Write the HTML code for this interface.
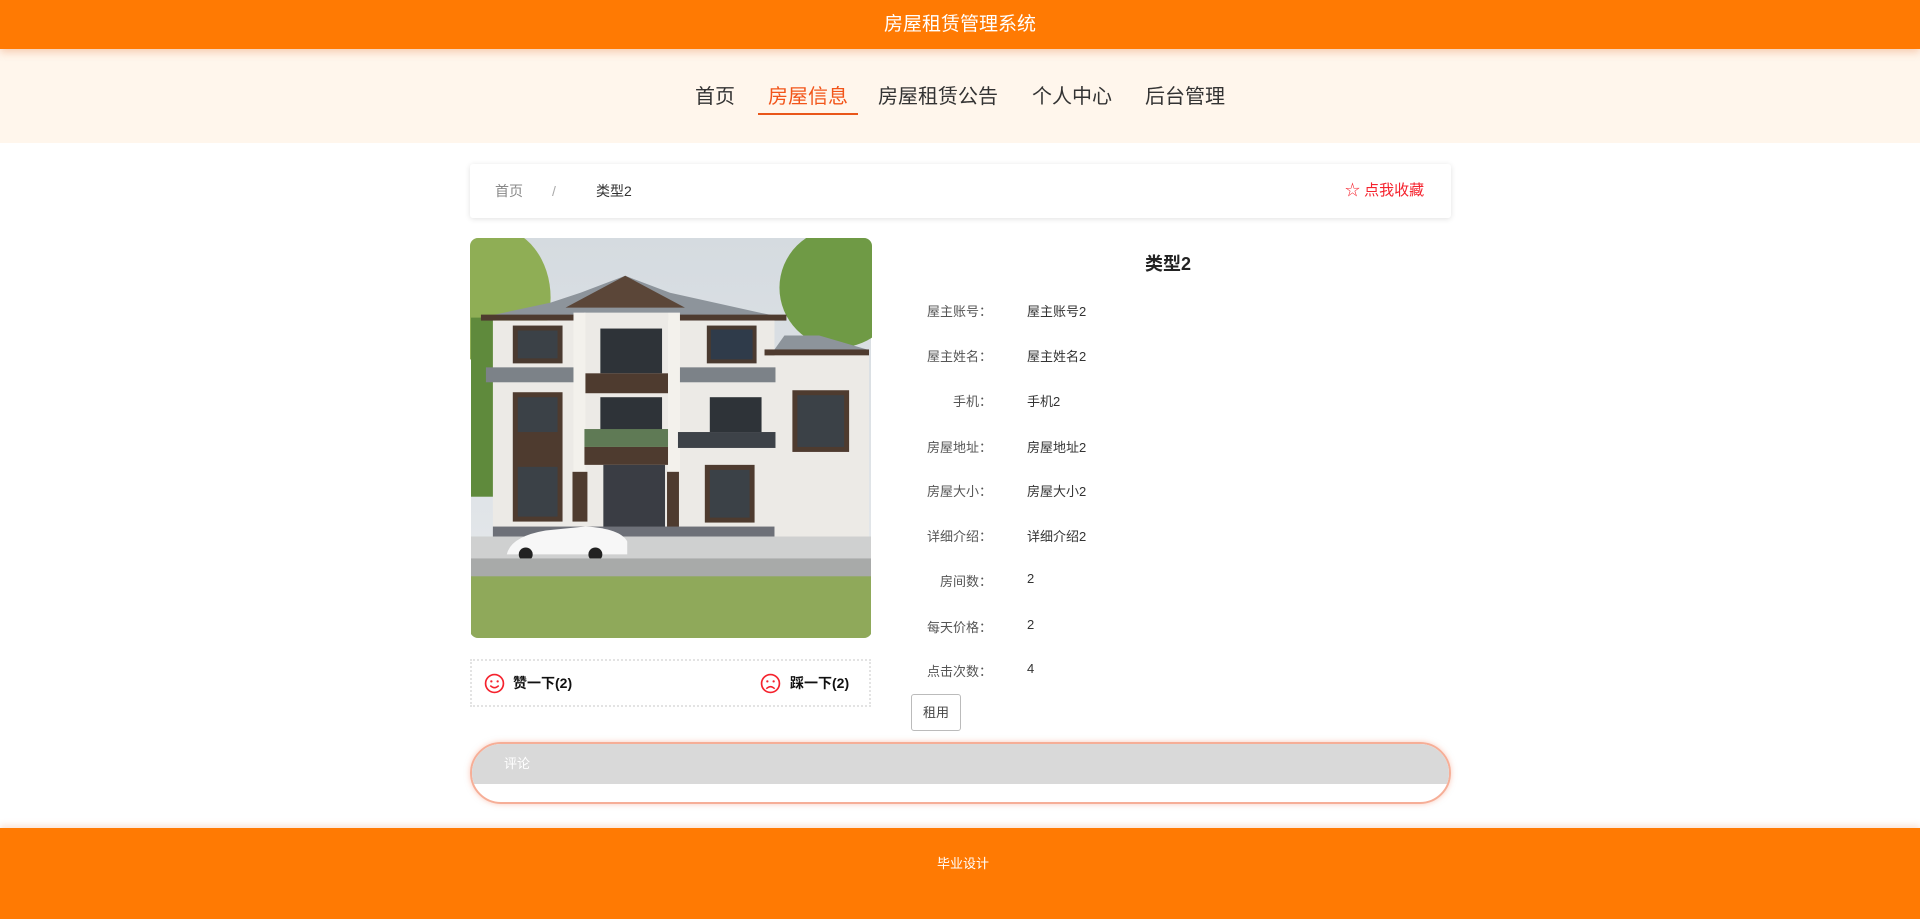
<!DOCTYPE html>
<html><head><meta charset="utf-8">
<style>
*{margin:0;padding:0;box-sizing:border-box}
body{width:1920px;height:919px;position:relative;background:#fff;font-family:"Liberation Sans","Noto Sans CJK SC",sans-serif;overflow:hidden;color:#333}
.abs{position:absolute}
.hdr{left:0;top:0;width:1920px;height:49px;background:#FF7A03;color:#fff;font-size:19px;text-align:center;line-height:50px;box-shadow:0 3px 8px rgba(230,120,60,.35);z-index:2}
.nav{left:0;top:49px;width:1920px;height:94px;background:#FFF6EC}
.nav span{position:absolute;top:34px;font-size:20px;color:#333;line-height:28px}
.bc{left:470px;top:164px;width:981px;height:54px;background:#fff;box-shadow:0 1px 6px rgba(0,0,0,.12);border-radius:3px;font-size:14px;line-height:54px}
.lbl{width:120px;text-align:right;left:872px;font-size:13px;color:#555}
.val{left:1027px;font-size:13px;color:#333}
</style></head><body>
<div class="abs hdr">房屋租赁管理系统</div>
<div class="abs nav">
<span style="left:695px">首页</span>
<span style="left:768px;color:#F2551A">房屋信息</span>
<div class="abs" style="left:758px;top:64px;width:100px;height:2px;background:#E9561A"></div>
<span style="left:878px">房屋租赁公告</span>
<span style="left:1032px">个人中心</span>
<span style="left:1145px">后台管理</span>
</div>
<div class="abs bc">
<span class="abs" style="left:25px;color:#888">首页</span>
<span class="abs" style="left:82px;color:#aaa">/</span>
<span class="abs" style="left:126px;color:#333">类型2</span>
<span class="abs" style="left:875px;color:#F5222D;font-size:15px">☆ 点我收藏</span>
</div>
<svg class="abs" style="left:470px;top:238px;border-radius:8px" width="402" height="400" viewBox="0 0 402 402">
<defs><linearGradient id="sk" x1="0" y1="0" x2="0" y2="1"><stop offset="0" stop-color="#d5dbe0"/><stop offset="1" stop-color="#e6e9ec"/></linearGradient></defs>
<rect width="402" height="402" fill="url(#sk)"/>
<ellipse cx="25" cy="60" rx="55" ry="70" fill="#8fae55"/>
<rect x="0" y="80" width="25" height="180" fill="#5f8a3c"/>
<ellipse cx="370" cy="50" rx="60" ry="60" fill="#6f9a45"/>
<polygon points="10,80 80,65 110,55 155,38 200,55 290,75 315,80" fill="#8d949b"/>
<polygon points="95,70 155,38 215,70" fill="#5b4638"/>
<rect x="10" y="77" width="307" height="6" fill="#4e3b2f"/>
<rect x="22" y="83" width="283" height="210" fill="#eceae6"/>
<polygon points="305,112 315,98 350,98 398,112" fill="#8d949b"/>
<rect x="295" y="112" width="105" height="6" fill="#4e3b2f"/>
<rect x="305" y="118" width="95" height="190" fill="#eceae6"/>
<rect x="15" y="130" width="88" height="15" fill="#7c8288"/>
<rect x="208" y="130" width="98" height="15" fill="#7c8288"/>
<rect x="42" y="88" width="50" height="38" fill="#4a3a30"/><rect x="47" y="93" width="40" height="28" fill="#3b4147"/>
<rect x="237" y="88" width="50" height="38" fill="#4a3a30"/><rect x="241" y="92" width="42" height="30" fill="#2f3b4a"/>
<rect x="114" y="75" width="84" height="80" fill="#eceae6"/>
<rect x="130" y="91" width="62" height="45" fill="#2e3338"/>
<rect x="114" y="136" width="84" height="20" fill="#4e3b2f"/>
<rect x="103" y="75" width="12" height="160" fill="#f3f1ec"/><rect x="198" y="75" width="12" height="160" fill="#f3f1ec"/>
<rect x="42" y="155" width="50" height="130" fill="#4e3b2f"/><rect x="47" y="160" width="40" height="35" fill="#3b4147"/><rect x="47" y="230" width="40" height="50" fill="#3b4147"/>
<rect x="130" y="160" width="62" height="35" fill="#2e3338"/><rect x="114" y="192" width="84" height="18" fill="#5f7a55"/>
<rect x="114" y="210" width="84" height="18" fill="#4e3b2f"/>
<rect x="240" y="160" width="52" height="35" fill="#2e3338"/><rect x="208" y="195" width="98" height="16" fill="#3d4248"/>
<rect x="323" y="153" width="57" height="62" fill="#4e3b2f"/><rect x="328" y="158" width="47" height="52" fill="#3b4147"/>
<rect x="133" y="228" width="62" height="78" fill="#3a3d44"/>
<rect x="102" y="235" width="15" height="50" fill="#4e3b2f"/><rect x="197" y="235" width="12" height="72" fill="#4e3b2f"/>
<rect x="235" y="228" width="50" height="58" fill="#4e3b2f"/><rect x="240" y="233" width="40" height="48" fill="#3b4147"/>
<rect x="22" y="290" width="283" height="12" fill="#6d7078"/>
<rect x="0" y="300" width="402" height="22" fill="#cfd0d0"/>
<path d="M36,318 Q40,300 75,294 L115,290 Q150,292 157,305 L157,318 Z" fill="#f7f7f7"/>
<circle cx="55" cy="318" r="7" fill="#222"/><circle cx="125" cy="318" r="7" fill="#222"/>
<rect x="0" y="322" width="402" height="20" fill="#a8aaa9"/>
<rect x="0" y="340" width="402" height="62" fill="#8fa95a"/>
</svg>
<div class="abs" style="left:470px;top:659px;width:401px;height:48px;border:2px dotted #e3e3e3;font-size:14px;font-weight:bold;color:#111;line-height:44px">
<svg class="abs" style="left:12px;top:12px" width="21" height="21" viewBox="0 0 20 20"><circle cx="10" cy="10" r="8.5" fill="none" stroke="#F5222D" stroke-width="1.6"/><circle cx="7" cy="8" r="1.1" fill="#F5222D"/><circle cx="13" cy="8" r="1.1" fill="#F5222D"/><path d="M6,12 Q10,16 14,12" fill="none" stroke="#F5222D" stroke-width="1.5"/></svg>
<span class="abs" style="left:41px">赞一下(2)</span>
<svg class="abs" style="left:288px;top:12px" width="21" height="21" viewBox="0 0 20 20"><circle cx="10" cy="10" r="8.5" fill="none" stroke="#F5222D" stroke-width="1.6"/><circle cx="7" cy="8" r="1.1" fill="#F5222D"/><circle cx="13" cy="8" r="1.1" fill="#F5222D"/><path d="M6,15 Q10,11 14,15" fill="none" stroke="#F5222D" stroke-width="1.5"/></svg>
<span class="abs" style="left:318px">踩一下(2)</span>
</div>
<div class="abs" style="left:1145px;top:250px;font-size:18px;font-weight:bold;color:#222">类型2</div>
<div class="abs lbl" style="top:301px">屋主账号：</div><div class="abs val" style="top:301px">屋主账号2</div>
<div class="abs lbl" style="top:346px">屋主姓名：</div><div class="abs val" style="top:346px">屋主姓名2</div>
<div class="abs lbl" style="top:391px">手机：</div><div class="abs val" style="top:391px">手机2</div>
<div class="abs lbl" style="top:437px">房屋地址：</div><div class="abs val" style="top:437px">房屋地址2</div>
<div class="abs lbl" style="top:481px">房屋大小：</div><div class="abs val" style="top:481px">房屋大小2</div>
<div class="abs lbl" style="top:526px">详细介绍：</div><div class="abs val" style="top:526px">详细介绍2</div>
<div class="abs lbl" style="top:571px">房间数：</div><div class="abs val" style="top:571px">2</div>
<div class="abs lbl" style="top:617px">每天价格：</div><div class="abs val" style="top:617px">2</div>
<div class="abs lbl" style="top:661px">点击次数：</div><div class="abs val" style="top:661px">4</div>
<div class="abs" style="left:911px;top:694px;width:50px;height:37px;border:1px solid #bbb;border-radius:3px;font-size:13px;line-height:35px;text-align:center;color:#444">租用</div>
<div class="abs" style="left:470px;top:742px;width:981px;height:62px;border:2px solid #f6ae97;border-radius:31px;overflow:hidden;box-shadow:0 0 6px rgba(246,150,120,.5)">
<div style="height:40px;background:#d9d9d9;color:#fff;font-size:13px;line-height:40px;padding-left:32px">评论</div>
</div>
<div class="abs" style="left:0;top:828px;width:1920px;height:91px;background:#FF7A03;box-shadow:0 -3px 6px rgba(230,120,60,.2);color:#fff;font-size:13px;text-align:center;line-height:72px;padding-left:6px">毕业设计</div>
</body></html>
